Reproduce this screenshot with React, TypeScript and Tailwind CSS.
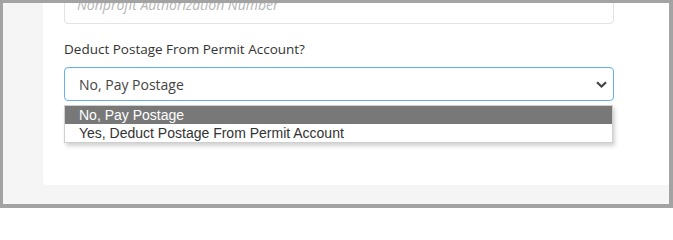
import React from 'react';

export default function App() {
  return (
    <div className="relative w-[673px] h-[208px] overflow-hidden border-t-[3px] border-l-[3px] border-r-4 border-b-4 border-[#a3a3a3] bg-[#f5f5f5] font-['Open_Sans',sans-serif]">
      <div className="ml-10 flex h-[182px] flex-col rounded-bl bg-white pl-[21px] pr-[55px]">
        {/* field above, scrolled mostly out of view */}
        <div className="-mt-[19px] flex h-[40px] shrink-0 items-center rounded border border-[#e3e3e3] px-[12px] text-[14px] italic text-[#b5b5b5]">
          Nonprofit Authorization Number
        </div>

        <label className="mt-[15px] block text-[13.5px] leading-[20px] text-[#333]">
          Deduct Postage From Permit Account?
        </label>

        <div className="mt-2 flex h-[34px] shrink-0 items-center justify-between rounded border border-[#66afe9] pl-[14px] pr-[5px] text-[14px] text-[#444] shadow-[inset_0_1px_1px_rgba(0,0,0,0.03)]">
          <span>No, Pay Postage</span>
          <svg width="11" height="7" viewBox="0 0 11 7" className="mr-[1px]">
            <path d="M1 1.2 L5.5 5.5 L10 1.2" fill="none" stroke="#444" strokeWidth="2.2" />
          </svg>
        </div>
      </div>

      {/* open native option list */}
      <div className="absolute left-[61px] top-[102px] w-[549px] border border-[#cfcfcf] bg-white font-['Liberation_Sans',Arial,sans-serif] text-[14px] leading-[18px] shadow-[2px_3px_4px_rgba(0,0,0,0.18)]">
        <div className="h-[18px] bg-[#787878] pl-[14px] text-white">No, Pay Postage</div>
        <div className="h-[18px] pl-[14px] text-[#333]">Yes, Deduct Postage From Permit Account</div>
      </div>
    </div>
  );
}
